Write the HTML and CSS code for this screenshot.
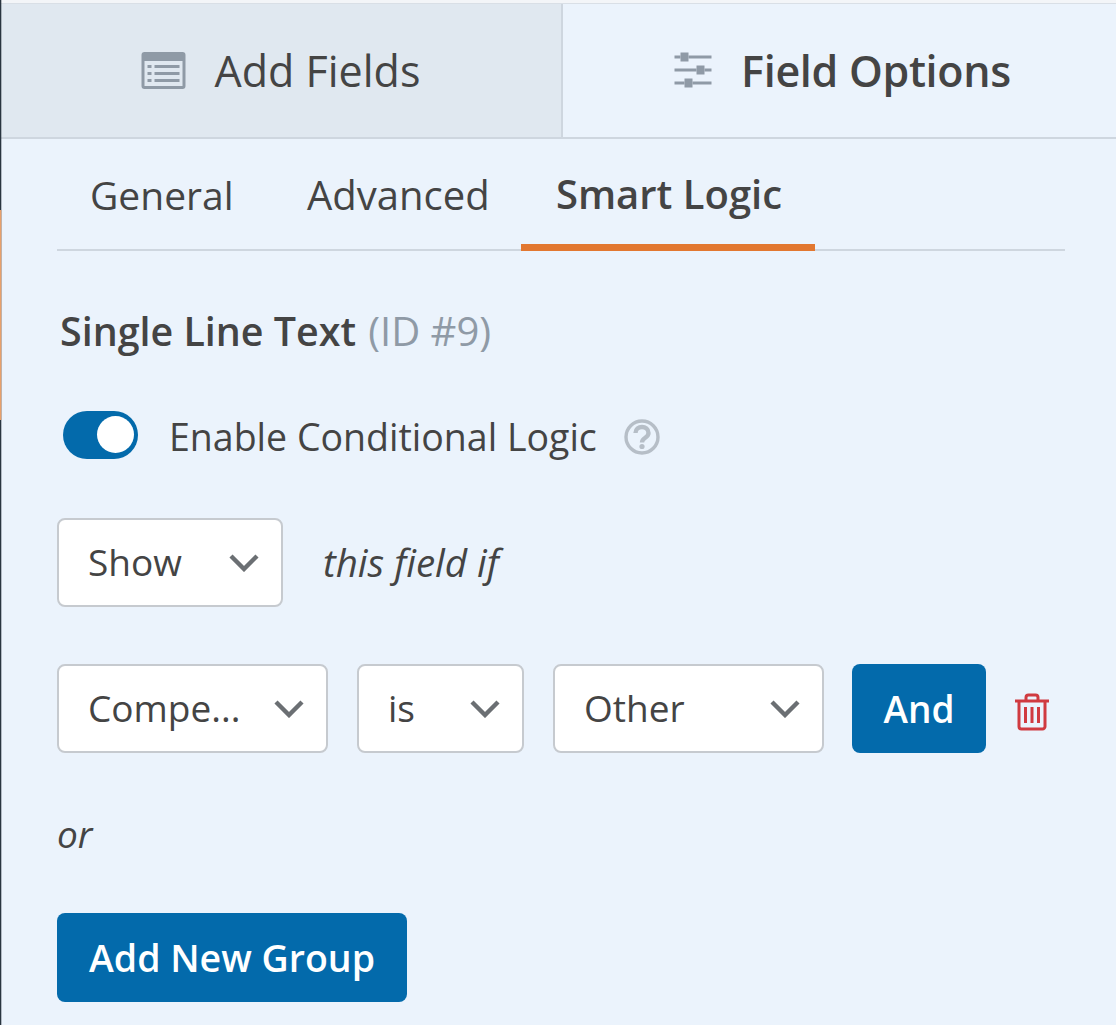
FILE: index.html
```html
<!DOCTYPE html>
<html lang="en">
<head>
<meta charset="utf-8">
<title>Field Options</title>
<link rel="stylesheet" href="styles.css">
</head>
<body>
<div class="edge"></div>
<div class="edge-accent"></div>
<main class="panel">
  <nav class="top-tabs">
    <div class="top-tab top-tab-muted">
      <svg class="icon-fields" viewBox="0 0 44 37" aria-hidden="true">
        <path fill="#8f9aa6" fill-rule="evenodd" d="M3 0h38a3 3 0 0 1 3 3v31a3 3 0 0 1-3 3H3a3 3 0 0 1-3-3V3a3 3 0 0 1 3-3zM3 9v25h38V9z"/>
        <path fill="#8f9aa6" d="M6 13h4v3H6zM13 13h25v3H13zM6 20h4v3H6zM13 20h25v3H13zM6 27h4v3H6zM13 27h25v3H13z"/>
      </svg>
      <span>Add Fields</span>
    </div>
    <div class="top-tab top-tab-active">
      <svg class="icon-sliders" viewBox="0 0 37 36" aria-hidden="true">
        <path fill="#8f9aa6" d="M0 3.500h6v3H0zM14 3.500h23v3H14zM0 16.500h22v3H0zM30 16.500h7v3h-7zM0 29.500h10v3H0zM18 29.500h19v3H18z"/>
        <path fill="#8f9aa6" d="M6 .5h8v9H6zM22 13.500h8v9h-8zM10 26.500h8v9h-8z"/>
      </svg>
      <span>Field Options</span>
    </div>
  </nav>

  <div class="sub-tabs">
    <span class="sub-tab sub-general">General</span>
    <span class="sub-tab sub-advanced">Advanced</span>
    <span class="sub-tab sub-active">Smart Logic</span>
  </div>

  <h2 class="field-title">Single Line Text <span class="field-id">(ID #9)</span></h2>

  <div class="toggle-row">
    <span class="toggle"><span class="knob"></span></span>
    <span class="toggle-label">Enable Conditional Logic</span>
    <svg class="help" viewBox="0 0 36 36" aria-hidden="true">
      <circle cx="18" cy="18" r="16" fill="none" stroke="#b6bec7" stroke-width="3.4"/>
      <path fill="none" stroke="#b6bec7" stroke-width="4.4" d="M11.5 14c0-8 13-8 13 0 0 5-6.500 4.500-6.500 9.500"/>
      <circle cx="18" cy="27.500" r="2.600" fill="#b6bec7"/>
    </svg>
  </div>

  <div class="logic-row row-show">
    <div class="select select-show"><span>Show</span><svg class="chev" viewBox="0 0 30 18" aria-hidden="true"><path d="M2 2l13 13L28 2"/></svg></div>
    <em class="aside">this field if</em>
  </div>

  <div class="logic-row row-rule">
    <div class="select select-field"><span>Compe...</span><svg class="chev" viewBox="0 0 30 18" aria-hidden="true"><path d="M2 2l13 13L28 2"/></svg></div>
    <div class="select select-op"><span>is</span><svg class="chev" viewBox="0 0 30 18" aria-hidden="true"><path d="M2 2l13 13L28 2"/></svg></div>
    <div class="select select-value"><span>Other</span><svg class="chev" viewBox="0 0 30 18" aria-hidden="true"><path d="M2 2l13 13L28 2"/></svg></div>
    <button class="btn btn-and" type="button">And</button>
    <svg class="trash" viewBox="0 0 36 38" aria-hidden="true">
      <path fill="none" stroke="#d03a40" stroke-width="3" stroke-linejoin="round" d="M1 8h34M12 8V4.500A2.500 2.500 0 0 1 14.500 2h7A2.500 2.500 0 0 1 24 4.500V8M5 8v25.500A2.500 2.500 0 0 0 7.500 36h21a2.500 2.500 0 0 0 2.500-2.500V8"/>
      <path fill="none" stroke="#d03a40" stroke-width="3" d="M11.500 14v16M18 14v16M24.500 14v16"/>
    </svg>
  </div>

  <p class="or">or</p>

  <button class="btn btn-group" type="button">Add New Group</button>
</main>
</body>
</html>
```

FILE: styles.css
```css
* { box-sizing: border-box; }
html, body { margin: 0; padding: 0; }
body {
  width: 1116px;
  height: 1025px;
  overflow: hidden;
  background: #ebf3fc;
  font-family: "Open Sans", "Noto Sans", sans-serif;
  color: #444444;
  position: relative;
}
.edge {
  position: absolute;
  left: 0; top: 0;
  width: 1px; height: 1025px;
  background: #2a3540;
  box-shadow: 1px 0 0 rgba(42, 53, 64, .3);
  z-index: 1;
}
.edge-accent {
  position: absolute;
  left: 0; top: 210px;
  width: 1px; height: 210px;
  background: #e8a06a;
  box-shadow: 1px 0 0 rgba(232, 160, 106, .3);
  z-index: 2;
}
.panel { border-top: 3px solid #f3f5f8; }
.top-tabs {
  display: flex;
  height: 136px;
  border-top: 1px solid #d9dfe6;
  border-bottom: 2px solid #ced6df;
}
.top-tab {
  display: flex;
  align-items: center;
  justify-content: center;
  padding-bottom: 1px;
}
.top-tab-muted {
  width: 563px;
  background: #e0e8f0;
  border-right: 2px solid #ced6df;
  gap: 29px;
  font-size: 43px;
}
.top-tab-active {
  flex: 1;
  gap: 28px;
  font-weight: 600;
  padding-left: 5px;
  font-size: 43px;
  letter-spacing: -0.3px;
}
.icon-fields { width: 45px; height: 37px; }
.icon-sliders { width: 40px; height: 36px; }

.sub-tabs {
  display: flex;
  margin: 0 51px 0 57px;
  height: 112px;
  border-bottom: 2px solid #ced6df;
}
.sub-tab { display: flex; align-items: center; height: 112px; padding-bottom: 2px; }
.sub-general { padding-left: 33px; width: 250px; font-size: 39px; }
.sub-advanced { width: 214px; font-size: 40px; }
.sub-active {
  width: 294px;
  justify-content: center;
  font-weight: 600;
  font-size: 40px;
  padding-top: 5px;
  padding-left: 2px;
  border-bottom: 7px solid #e27730;
}

.field-title {
  margin: 55px 0 0 60px;
  font-size: 39.4px;
  line-height: 50px;
  font-weight: 600;
}
.field-id { font-weight: 400; color: #8f9aa6; font-size: 40px; margin-left: 2px; }

.toggle-row {
  display: flex;
  align-items: center;
  margin: 55px 0 0 63px;
  height: 48px;
}
.toggle {
  display: block;
  width: 75px; height: 48px;
  border-radius: 24px;
  background: #036aab;
  position: relative;
}
.knob {
  position: absolute;
  left: 34px; top: 5px;
  width: 37px; height: 37px;
  border-radius: 50%;
  background: #ffffff;
}
.toggle-label {
  margin-left: 31px;
  font-size: 37.5px;
  padding-top: 2px;
}
.help { width: 36px; height: 36px; margin-left: 27px; margin-top: 3px; }

.logic-row { display: flex; align-items: center; margin-left: 57px; }
.row-show { margin-top: 59px; }
.row-rule { margin-top: 57px; }
.select {
  display: flex;
  align-items: center;
  justify-content: space-between;
  height: 89px;
  background: #ffffff;
  border: 2px solid #c6cacf;
  border-radius: 8px;
  padding: 0 22px 2px 29px;
  font-size: 37px;
}
.chev { width: 30px; height: 18px; fill: none; stroke: #6b6f73; stroke-width: 4.4; flex: none; margin-top: 2px; }
.select-show { width: 226px; }
.aside {
  margin-left: 40px;
  margin-bottom: 2px;
  font-size: 38.5px;
  font-style: italic;
}
.select-field { width: 271px; padding-right: 22px; }
.select-op { width: 167px; margin-left: 29px; }
.select-value { width: 271px; margin-left: 29px; }
.btn {
  display: block;
  border: 0;
  border-radius: 8px;
  background: #036aab;
  color: #ffffff;
  font-family: inherit;
  font-size: 37.5px;
  font-weight: 600;
  padding: 0;
  height: 89px;
}
.btn-and { width: 134px; margin-left: 28px; font-size: 37px; }
.trash { width: 36px; height: 38px; margin-left: 28px; margin-top: 6px; }
.or {
  margin: 56px 0 0 57px;
  font-size: 37px;
  line-height: 50px;
  font-style: italic;
}
.btn-group { width: 350px; margin: 54px 0 0 57px; }
```
